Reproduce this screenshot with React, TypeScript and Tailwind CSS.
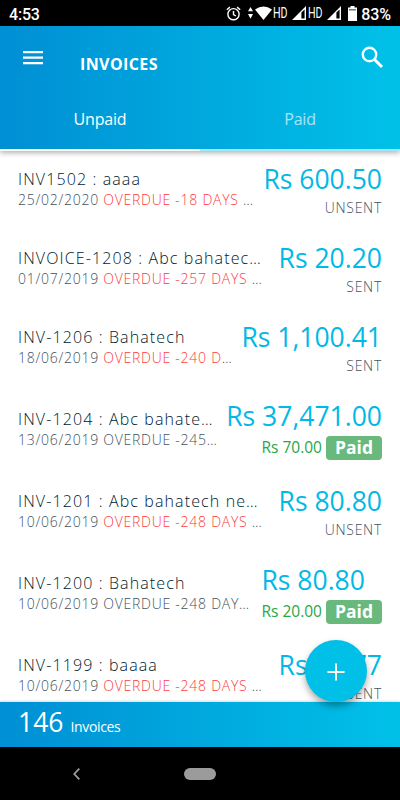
import { clsx } from "clsx";

interface Invoice {
  title: string;
  date: string;
  overdue: string;
  muted?: boolean;
  amount: string;
  status?: string;
  paid?: string;
}

const INVOICES: Invoice[] = [
  { title: "INV1502 : aaaa", date: "25/02/2020", overdue: "OVERDUE -18 DAYS", amount: "Rs 600.50", status: "UNSENT" },
  { title: "INVOICE-1208 : Abc bahatec…", date: "01/07/2019", overdue: "OVERDUE -257 DAYS", amount: "Rs 20.20", status: "SENT" },
  { title: "INV-1206 : Bahatech", date: "18/06/2019", overdue: "OVERDUE -240 D", amount: "Rs 1,100.41", status: "SENT" },
  { title: "INV-1204 : Abc bahate…", date: "13/06/2019", overdue: "OVERDUE -245", muted: true, amount: "Rs 37,471.00", paid: "Rs 70.00" },
  { title: "INV-1201 : Abc bahatech ne…", date: "10/06/2019", overdue: "OVERDUE -248 DAYS", amount: "Rs 80.80", status: "UNSENT" },
  { title: "INV-1200 : Bahatech", date: "10/06/2019", overdue: "OVERDUE -248 DAY", muted: true, amount: "Rs 80.80", paid: "Rs 20.00" },
  { title: "INV-1199 : baaaa", date: "10/06/2019", overdue: "OVERDUE -248 DAYS", amount: "Rs 56.77", status: "UNSENT" },
];

function Signal() {
  return (
    <svg width="14" height="14" viewBox="0 0 14 14" fill="#fff">
      <path fillRule="evenodd" d="M14 0V14H0ZM12.6 3.4L9.4 6.6V12.6H12.6Z" />
    </svg>
  );
}

function StatusBar() {
  return (
    <div className="flex h-[26px] items-center bg-black pl-[9px] pr-[9px] font-['Roboto',sans-serif] text-white">
      <span className="mt-[3px] text-[16px] font-medium leading-none tracking-[-0.2px]">4:53</span>
      <div className="ml-auto flex items-center">
        <svg width="15" height="15" viewBox="0 0 15 15" fill="none" stroke="#fff" strokeWidth="1.4">
          <circle cx="7.5" cy="8.2" r="5.6" />
          <path d="M7.5 5v3.6l2.4 1.4M.8 3.7L3.9 1.1M14.2 3.7L11.1 1.1" />
        </svg>
        <svg className="ml-[7px]" width="5" height="14" viewBox="0 0 5 14" fill="#fff">
          <path d="M2.5 1L5 5.3H0ZM2.5 12.7L5 8H0Z" />
        </svg>
        <svg className="ml-[2px]" width="17" height="14" viewBox="0 0 17 14" fill="#fff">
          <path d="M0 3.5Q8.5-2.5 17 3.5L8.5 14Z" />
        </svg>
        <span className="ml-px w-[14px] origin-left scale-x-[0.76] text-[14px] leading-none">HD</span>
        <span className="ml-[5px]"><Signal /></span>
        <span className="ml-[2px] w-[14px] origin-left scale-x-[0.76] text-[14px] leading-none">HD</span>
        <span className="ml-[5px]"><Signal /></span>
        <svg className="ml-[7px]" width="9" height="15" viewBox="0 0 9 15">
          <path fill="#fff" d="M2.5 0h4v1.5H9V15H0V1.5h2.5z" />
          <path fill="#777" d="M1 3h7v1.5H1z" />
        </svg>
        <span className="ml-[4px] mt-[3px] text-[16px] font-medium leading-none tracking-[-0.1px]">83%</span>
      </div>
    </div>
  );
}

function Header() {
  return (
    <header className="relative z-10 h-[125px] bg-linear-to-r from-[#008fd4] to-[#00c1e8] text-white shadow-[0_2px_5px_rgba(0,0,0,0.3)]">
      <div className="flex h-[66px] items-center pl-[23px] pr-[16px]">
        <svg className="mb-[2px]" width="20" height="14" viewBox="0 0 20 14" fill="#fff">
          <path d="M0 0h20v2.3H0zM0 5.5h20v2.3H0zM0 11h20v2.3H0z" />
        </svg>
        <h1 className="ml-[37px] mt-[9px] text-[16px] font-bold leading-none tracking-[0.4px]">INVOICES</h1>
        <svg className="-mt-[3px] ml-auto" width="23" height="23" viewBox="0 0 23 23" fill="none" stroke="#fff">
          <circle cx="8.5" cy="8.5" r="6.7" strokeWidth="2.4" />
          <path d="M13.5 13.5l7.5 7.5" strokeWidth="3" />
        </svg>
      </div>
      <div className="grid h-[59px] grid-cols-2 text-center text-[16px] leading-[54px] tracking-[-0.2px]">
        <div className="border-b-2 border-white">Unpaid</div>
        <div className="border-b-2 border-[#a8e6f5] text-white/65">Paid</div>
      </div>
    </header>
  );
}

function InvoiceRow({ invoice }: { invoice: Invoice }) {
  const { title, date, overdue, muted, amount, status, paid } = invoice;
  return (
    <li className={clsx("flex shrink-0 items-center justify-between px-[18px]", paid ? "h-[85px]" : "h-[79px]")}>
      <div className="-mt-px whitespace-nowrap">
        <div className="text-[16px] font-light leading-[20px] tracking-[1.12px] text-[#001a2c]">{title}</div>
        <div className="text-[14px] font-light leading-[22px] tracking-[0.74px] text-[#41535f]">
          {date} <span className={clsx(!muted && "text-[#fa3c42]")}>{overdue}</span>
          {!muted && overdue.endsWith("S") ? " …" : "…"}
        </div>
      </div>
      <div className="flex flex-col self-start whitespace-nowrap pt-[10px]">
        <div className={clsx("text-[26.5px] leading-[36px] text-[#00b9e6]", overdue !== "OVERDUE -248 DAY" && "text-right")}>{amount}</div>
        {paid ? (
          <div className="mt-[2px] flex items-center justify-end text-[15.5px] text-[#28a745]">
            {paid}
            <span className="ml-[4px] h-[24px] w-[56px] rounded-[4px] bg-[#68b97b] text-center text-[17.5px] font-bold leading-[23px] text-white">Paid</span>
          </div>
        ) : (
          <div className="text-right text-[14px] font-light leading-[22px] tracking-[0.72px] text-[#41535f]">{status}</div>
        )}
      </div>
    </li>
  );
}

export default function App() {
  return (
    <div className="relative flex h-[800px] w-[400px] flex-col overflow-hidden bg-white font-['Open_Sans',sans-serif]">
      <StatusBar />
      <Header />
      <ul className="flex min-h-0 flex-1 flex-col overflow-hidden">
        {INVOICES.map((invoice) => (
          <InvoiceRow key={invoice.title} invoice={invoice} />
        ))}
      </ul>
      <footer className="flex h-[45px] items-baseline bg-linear-to-r from-[#008fd4] to-[#00c1e8] pl-[18px] text-white shadow-[0_-1px_2px_rgba(0,0,0,0.15)]">
        <span className="text-[26.5px] leading-[41px]">146</span>
        <span className="ml-[7px] text-[14px] tracking-[-0.35px]">Invoices</span>
      </footer>
      <nav className="flex h-[53px] items-center bg-black pl-[73px]">
        <svg width="7" height="12" viewBox="0 0 7 12" fill="none" stroke="#9b9b9b" strokeWidth="1.8">
          <path d="M6.3 .7L1.3 6l5 5.3" />
        </svg>
        <span className="ml-[104px] h-[12px] w-[32px] rounded-full bg-[#9b9b9b]" />
      </nav>
      {/* Floating add button */}
      <button className="absolute left-[305px] top-[640px] z-20 flex size-[62px] items-center justify-center rounded-full bg-[#00c0e8] shadow-[0_4px_7px_rgba(0,0,0,0.35)]">
        <svg className="mt-[2px] -ml-px" width="18" height="18" viewBox="0 0 18 18" stroke="#fff" strokeWidth="2">
          <path d="M9 .5v17M.5 9h17" />
        </svg>
      </button>
    </div>
  );
}
